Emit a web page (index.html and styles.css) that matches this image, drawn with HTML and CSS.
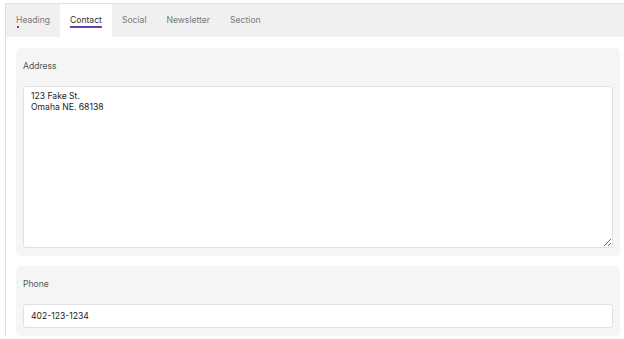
FILE: index.html
```html
<!DOCTYPE html>
<html>
<head>
<meta charset="utf-8">
<link rel="stylesheet" href="styles.css">
</head>
<body>
<div class="wrap">
  <div class="tabs">
    <div class="tab tab-first"><span class="tab-label">Heading</span></div>
    <div class="tab active"><span class="tab-label">Contact</span></div>
    <div class="tab"><span class="tab-label">Social</span></div>
    <div class="tab"><span class="tab-label">Newsletter</span></div>
    <div class="tab"><span class="tab-label">Section</span></div>
  </div>
  <div class="content">
    <div class="card">
      <label class="label">Address</label>
      <textarea class="area">123 Fake St.
Omaha NE. 68138</textarea>
    </div>
    <div class="card">
      <label class="label">Phone</label>
      <input class="field" type="text" value="402-123-1234">
    </div>
  </div>
</div>
</body>
</html>
```

FILE: styles.css
```css
html, body {
  margin: 0;
  padding: 0;
  background: #ffffff;
}
body {
  font-family: Inter, "Noto Sans", sans-serif;
  font-size: 8.6px;
  color: #333;
}
.wrap {
  margin: 3px 0 0 5px;
  border-left: 1px solid #dedede;
  border-top: 1px solid #e4e4e4;
}
.tabs {
  display: flex;
  background: #f0f0f0;
  height: 33px;
}
.tab {
  padding: 0 10px;
  display: flex;
  align-items: center;
  color: #7a7a7a;
}
.tab-label {
  position: relative;
  line-height: 12px;
  margin-top: -1px;
}
.tab-first .tab-label::after {
  content: "";
  position: absolute;
  left: 1px;
  bottom: -2px;
  width: 2px;
  height: 2px;
  background: #6a3fb0;
}
.tab.active {
  background: #ffffff;
  color: #333;
}
.tab.active .tab-label::after {
  content: "";
  position: absolute;
  left: 0;
  right: 0;
  bottom: -2px;
  height: 2px;
  background: #6a3fb0;
}
.content {
  padding: 11px 4px 0 10px;
  display: flex;
  flex-direction: column;
  gap: 10px;
}
.card {
  background: #f5f5f5;
  border-radius: 5px;
  padding: 12px 7px 8px 7px;
  display: flex;
  flex-direction: column;
}
.label {
  line-height: 12px;
  margin-bottom: 14px;
  color: #555;
}
.area, .field {
  font-family: Inter, "Noto Sans", sans-serif;
  font-size: 8.6px;
  color: #222;
  background: #fff;
  border: 1px solid #e0e0e6;
  border-radius: 3px;
  box-sizing: border-box;
  outline: none;
  margin: 0;
}
.area {
  height: 162px;
  padding: 4px 7px;
  line-height: 11px;
  resize: vertical;
}
.field {
  height: 24px;
  padding: 0 7px;
}
```
